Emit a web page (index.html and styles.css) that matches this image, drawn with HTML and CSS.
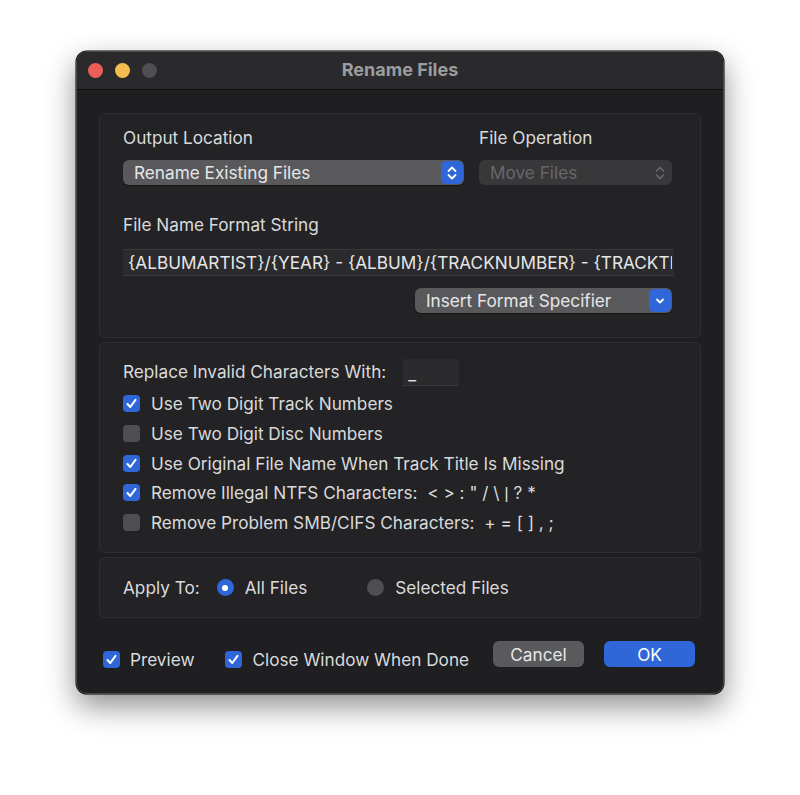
FILE: index.html
```html
<!DOCTYPE html>
<html>
<head>
<meta charset="utf-8">
<link rel="stylesheet" href="styles.css">
</head>
<body>
<div class="window">
  <div class="titlebar">
    <div class="lights">
      <span class="light red"></span>
      <span class="light yellow"></span>
      <span class="light grey"></span>
    </div>
    <div class="title">Rename Files</div>
  </div>
  <div class="content">
    <div class="box box1">
      <div class="grid2">
        <div class="label">Output Location</div>
        <div class="label">File Operation</div>
        <div class="popup">
          <span>Rename Existing Files</span>
          <span class="stepper">
            <svg width="12" height="16" viewBox="0 0 12 16"><path d="M2.5 6 L6 2.5 L9.5 6 M2.5 10 L6 13.5 L9.5 10" fill="none" stroke="#fff" stroke-width="1.8" stroke-linecap="round" stroke-linejoin="round"/></svg>
          </span>
        </div>
        <div class="popup disabled">
          <span>Move Files</span>
          <span class="stepper plain">
            <svg width="12" height="16" viewBox="0 0 12 16"><path d="M2.5 6 L6 2.5 L9.5 6 M2.5 10 L6 13.5 L9.5 10" fill="none" stroke="#6a6a6c" stroke-width="1.6" stroke-linecap="round" stroke-linejoin="round"/></svg>
          </span>
        </div>
      </div>
      <div class="label fmt-label">File Name Format String</div>
      <div class="textfield"><span class="tfclip">{ALBUMARTIST}/{YEAR} - {ALBUM}/{TRACKNUMBER} - {TRACKTITLE}</span></div>
      <div class="insert-row">
        <div class="popup insert">
          <span>Insert Format Specifier</span>
          <span class="stepper">
            <svg width="12" height="12" viewBox="0 0 12 12"><path d="M3 4.5 L6 7.5 L9 4.5" fill="none" stroke="#fff" stroke-width="1.8" stroke-linecap="round" stroke-linejoin="round"/></svg>
          </span>
        </div>
      </div>
    </div>

    <div class="box box2">
      <div class="replace-row">
        <span class="label">Replace Invalid Characters With:</span>
        <span class="smallfield">_</span>
      </div>
      <div class="check-row"><span class="cb on"><svg width="17" height="17" viewBox="0 0 17 17"><path d="M4.5 9 L7.3 12 L12.5 4.8" fill="none" stroke="#fff" stroke-width="2" stroke-linecap="round" stroke-linejoin="round"/></svg></span><span>Use Two Digit Track Numbers</span></div>
      <div class="check-row"><span class="cb"></span><span>Use Two Digit Disc Numbers</span></div>
      <div class="check-row"><span class="cb on"><svg width="17" height="17" viewBox="0 0 17 17"><path d="M4.5 9 L7.3 12 L12.5 4.8" fill="none" stroke="#fff" stroke-width="2" stroke-linecap="round" stroke-linejoin="round"/></svg></span><span>Use Original File Name When Track Title Is Missing</span></div>
      <div class="check-row"><span class="cb on"><svg width="17" height="17" viewBox="0 0 17 17"><path d="M4.5 9 L7.3 12 L12.5 4.8" fill="none" stroke="#fff" stroke-width="2" stroke-linecap="round" stroke-linejoin="round"/></svg></span><span>Remove Illegal NTFS Characters:&nbsp; &lt; &gt; : " / \ <span class="pipe">|</span> ? *</span></div>
      <div class="check-row"><span class="cb"></span><span>Remove Problem SMB/CIFS Characters:&nbsp; + = [ ] , ;</span></div>
    </div>

    <div class="box box3">
      <span class="label apply">Apply To:</span>
      <span class="radio on"></span><span class="rlabel">All Files</span>
      <span class="radio"></span><span class="rlabel">Selected Files</span>
    </div>

    <div class="footer">
      <div class="check-row foot"><span class="cb on"><svg width="17" height="17" viewBox="0 0 17 17"><path d="M4.5 9 L7.3 12 L12.5 4.8" fill="none" stroke="#fff" stroke-width="2" stroke-linecap="round" stroke-linejoin="round"/></svg></span><span>Preview</span></div>
      <div class="check-row foot last"><span class="cb on"><svg width="17" height="17" viewBox="0 0 17 17"><path d="M4.5 9 L7.3 12 L12.5 4.8" fill="none" stroke="#fff" stroke-width="2" stroke-linecap="round" stroke-linejoin="round"/></svg></span><span>Close Window When Done</span></div>
      <div class="btn cancel">Cancel</div>
      <div class="btn ok">OK</div>
    </div>
  </div>
</div>
</body>
</html>
```

FILE: styles.css
```css
* { box-sizing: border-box; }
html, body { margin: 0; padding: 0; }
body {
  background: #ffffff;
  width: 800px;
  height: 795px;
  padding: 51px 76px 0 76px;
  font-family: "Inter", "Liberation Sans", sans-serif;
  font-size: 17.2px;
  color: #dadadc;
}
.window {
  width: 648px;
  height: 643px;
  background: #1f1f21;
  border-radius: 11px;
  border: 1px solid #4a4a4c;
  box-shadow: 0 12px 30px rgba(0,0,0,0.45), 0 0 0 0.5px #000;
  overflow: hidden;
}
.titlebar {
  height: 38px;
  background: #2a2a2c;
  border-bottom: 1px solid #0f0f10;
  display: flex;
  align-items: center;
  position: relative;
}
.lights {
  display: flex;
  gap: 12px;
  padding-left: 11px;
}
.light {
  width: 15px;
  height: 15px;
  border-radius: 50%;
  display: block;
}
.red { background: #ec5f57; }
.yellow { background: #f4be4e; }
.grey { background: #4f4f51; }
.title {
  position: absolute;
  left: 0; right: 0;
  top: 8px;
  text-align: center;
  font-weight: 700;
  font-size: 18px;
  line-height: 20px;
  color: #9c9c9e;
}
.content {
  padding: 23px 22px 0 22px;
}
.box {
  background: #232325;
  border: 1px solid #2f2f31;
  border-radius: 6px;
}
.box1 {
  padding: 14px 28px 21px 23px;
  height: 225px;
}
.grid2 {
  display: grid;
  grid-template-columns: 341px 193px;
  column-gap: 15px;
  row-gap: 12px;
}
.label { line-height: 20px; white-space: nowrap; }
.popup {
  height: 25px;
  border-radius: 6px;
  background: #59595b;
  display: flex;
  align-items: center;
  justify-content: space-between;
  padding-left: 11px;
  padding-right: 1px;
  color: #e6e6e8;
  box-shadow: 0 1px 1px rgba(0,0,0,0.4);
}
.popup.disabled {
  background: #38383a;
  color: #67676a;
  box-shadow: none;
}
.stepper {
  width: 22px;
  height: 23px;
  border-radius: 5px;
  background: #2f67d9;
  display: flex;
  align-items: center;
  justify-content: center;
}
.stepper.plain { background: transparent; }
.fmt-label { margin-top: 30px; }
.textfield {
  margin-top: 14px;
  height: 27px;
  width: 551px;
  background: #2b2b2d;
  border-top: 1px solid #3a3a3c;
  border-bottom: 1px solid #3a3a3c;
  padding-left: 5px;
  padding-right: 2px;
  line-height: 25px;
  color: #e6e6e8;
}
.tfclip {
  display: block;
  white-space: nowrap;
  overflow: hidden;
}
.insert-row {
  display: flex;
  justify-content: flex-end;
  margin-top: 12px;
}
.popup.insert {
  width: 257px;
}
.box2 {
  margin-top: 4px;
  height: 211px;
  padding: 15px 20px 0 23px;
}
.replace-row {
  display: flex;
  align-items: center;
  height: 28px;
}
.smallfield {
  margin-left: 17px;
  width: 56px;
  height: 27px;
  background: #2b2b2d;
  border-bottom: 1px solid #3a3a3c;
  border-top: 1px solid #2a2a2c;
  padding-left: 5px;
  line-height: 27px;
  color: #e6e6e8;
}
.check-row {
  display: flex;
  align-items: center;
  height: 29.7px;
  white-space: nowrap;
}
.pipe { font-family: "Liberation Sans", sans-serif; }
.replace-row + .check-row { margin-top: 3px; }
.cb {
  width: 17px;
  height: 17px;
  border-radius: 4px;
  background: #4f4f51;
  margin-right: 11px;
  display: block;
  flex: none;
}
.cb.on { background: #2f67d9; }
.cb svg { display: block; }
.box3 {
  margin-top: 4px;
  height: 61px;
  display: flex;
  align-items: center;
  padding-left: 23px;
}
.apply { margin-right: 17px; }
.radio {
  width: 17px;
  height: 17px;
  border-radius: 50%;
  background: #4f4f51;
  display: block;
  position: relative;
  margin-right: 11px;
}
.radio.on { background: #2f67d9; }
.radio.on::after {
  content: "";
  position: absolute;
  left: 5.5px; top: 5.5px;
  width: 6px; height: 6px;
  border-radius: 50%;
  background: #fff;
}
.rlabel { margin-right: 60px; }
.footer {
  display: flex;
  align-items: center;
  margin-top: 23px;
  padding-left: 4px;
  padding-right: 6px;
  height: 28px;
}
.check-row.foot { margin-top: 8px; margin-right: 31px; flex: none; }
.check-row.foot.last { margin-right: 0; }
.check-row.foot .cb { margin-right: 10px; }
.btn {
  height: 26px;
  width: 91px;
  border-radius: 6px;
  display: flex;
  align-items: center;
  justify-content: center;
  color: #e6e6e8;
  margin-top: -2px;
  flex: none;
}
.cancel { background: #5a5a5c; margin-left: auto; }
.ok { background: #2f67d9; margin-left: 20px; color: #fff; }
```
